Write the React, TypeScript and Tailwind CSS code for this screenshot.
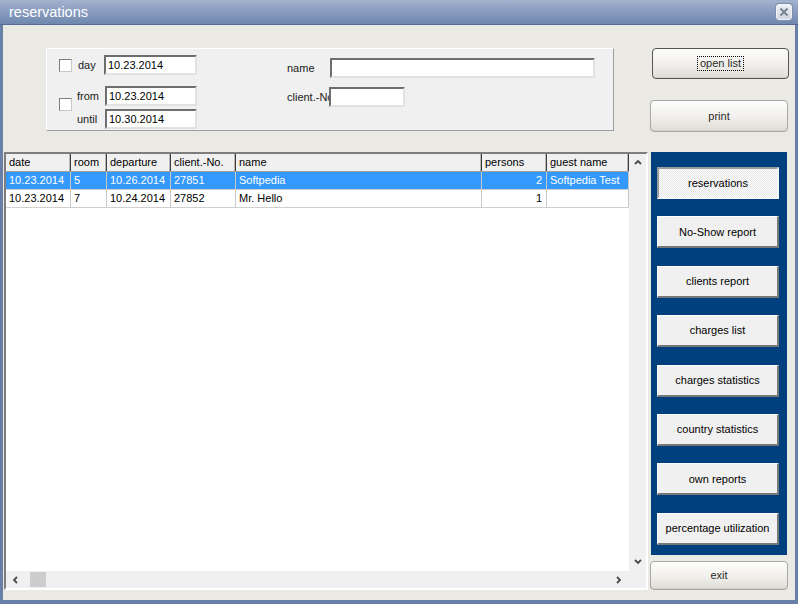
import React from 'react'

const font = "font-['Liberation_Sans',Arial,sans-serif]"

const columns = [
  { label: 'date', w: 'w-[65px]', right: false },
  { label: 'room', w: 'w-[36px]', right: false },
  { label: 'departure', w: 'w-[64px]', right: false },
  { label: 'client.-No.', w: 'w-[65px]', right: false },
  { label: 'name', w: 'w-[246px]', right: false },
  { label: 'persons', w: 'w-[65px]', right: true },
  { label: 'guest name', w: 'w-[82px]', right: false },
]

const rows = [
  { cells: ['10.23.2014', '5', '10.26.2014', '27851', 'Softpedia', '2', 'Softpedia Test'], selected: true },
  { cells: ['10.23.2014', '7', '10.24.2014', '27852', 'Mr. Hello', '1', ''], selected: false },
]

const reports = [
  'reservations',
  'No-Show report',
  'clients report',
  'charges list',
  'charges statistics',
  'country statistics',
  'own reports',
  'percentage utilization',
]

function Chevron({ dir }: { dir: 'up' | 'down' | 'left' | 'right' }) {
  const d = {
    up: 'M1 5 L4 2 L7 5',
    down: 'M1 2 L4 5 L7 2',
    left: 'M5 1 L2 4 L5 7',
    right: 'M2 1 L5 4 L2 7',
  }[dir]
  return (
    <svg width={8} height={8} viewBox="0 0 8 8" fill="none" stroke="#4a4a4a" strokeWidth={1.8}>
      <path d={d} />
    </svg>
  )
}

function Field({ value = '', w }: { value?: string; w: string }) {
  return (
    <div
      className={`${w} h-[20px] shrink-0 bg-white border-2 border-t-[#6e6e6e] border-l-[#6e6e6e] border-r-[#e2e2e2] border-b-[#e2e2e2] flex items-center pl-[2px] text-[11px] text-black leading-none`}
    >
      {value}
    </div>
  )
}

function Check() {
  return (
    <div className="w-[13px] h-[13px] shrink-0 bg-white border border-t-[#7c7c7c] border-l-[#7c7c7c] border-r-[#c8c8c8] border-b-[#c8c8c8]" />
  )
}

function XpButton({ label, w, h, def }: { label: string; w: string; h: string; def?: boolean }) {
  return (
    <button
      type="button"
      className={`${w} ${h} shrink-0 rounded-[4px] border ${
        def ? 'border-[#555555]' : 'border-[#a8a8a8]'
      } bg-[linear-gradient(#fdfdfc,#f1efeb_55%,#dfdcd5)] shadow-[inset_0_-1px_0_#d2cfc8] flex items-center justify-center text-[11px] text-[#2a2a2a]`}
    >
      {def ? <span className="border border-dotted border-black px-[2px] leading-[13px]">{label}</span> : label}
    </button>
  )
}

function ReportButton({ label, active }: { label: string; active: boolean }) {
  return (
    <button
      type="button"
      className={`w-[122px] h-[32px] shrink-0 flex items-center justify-center text-[11px] text-black ${
        active
          ? 'border-2 border-t-[#9c9c9c] border-l-[#9c9c9c] border-r-[#f6f6f6] border-b-[#f6f6f6] bg-[image:repeating-conic-gradient(#ffffff_0%_25%,#e4e4e4_0%_50%)] bg-size-[2px_2px]'
          : 'bg-[#f0f0f0] border-t border-l border-t-white border-l-white border-b-2 border-r-2 border-b-[#777777] border-r-[#777777]'
      }`}
    >
      {label}
    </button>
  )
}

export default function App() {
  return (
    <div className={`w-[798px] h-[604px] bg-[#6880a8] flex flex-col overflow-hidden ${font}`}>
      {/* Title bar */}
      <div className="h-[25px] shrink-0 flex items-center justify-between pl-[9px] pr-[6px] bg-[linear-gradient(#a3b3cf,#8a9ec1_45%,#7088ae)] border-b border-[#566c95]">
        <span className="text-[14.5px] text-white leading-none">reservations</span>
        <div className="w-[16px] h-[16px] rounded-[3px] border border-[#f2f4f8] bg-[linear-gradient(#eef1f6,#cfd6e2)] shadow-[0_0_0_1px_#7d8fae] flex items-center justify-center">
          <svg width={10} height={10} viewBox="0 0 10 10" stroke="#7b8494" strokeWidth={2}>
            <path d="M1.5 1.5 L8.5 8.5 M8.5 1.5 L1.5 8.5" />
          </svg>
        </div>
      </div>

      {/* Client area */}
      <div className="flex-1 mx-[3px] mb-[4px] bg-[#ebe9e3] flex pl-[1px] pr-[7px]">
        {/* Left column */}
        <div className="w-[644px] flex flex-col">
          {/* Filter panel */}
          <div className="ml-[42px] mt-[23px] w-[568px] h-[83px] bg-[#f0f0f0] border border-t-white border-l-white border-r-[#a0a0a0] border-b-[#a0a0a0] flex pl-[12px] pt-[6px] text-[11px] text-[#1a1a1a]">
            <div className="flex flex-col">
              <div className="flex items-center h-[20px]">
                <Check />
                <span className="ml-[6px] w-[26px]">day</span>
                <Field value="10.23.2014" w="w-[93px]" />
              </div>
              <div className="flex items-start mt-[11px]">
                <div className="mt-[12px]">
                  <Check />
                </div>
                <div className="ml-[5px] flex flex-col gap-[3px]">
                  <div className="flex items-center">
                    <span className="w-[28px]">from</span>
                    <Field value="10.23.2014" w="w-[92px]" />
                  </div>
                  <div className="flex items-center">
                    <span className="w-[28px]">until</span>
                    <Field value="10.30.2014" w="w-[92px]" />
                  </div>
                </div>
              </div>
            </div>
            <div className="ml-[90px] mt-[3px] flex flex-col">
              <div className="flex items-center">
                <span className="w-[43px]">name</span>
                <Field w="w-[265px]" />
              </div>
              <div className="flex items-center mt-[9px]">
                <span className="w-[42px] overflow-hidden whitespace-nowrap">client.-No.</span>
                <Field w="w-[76px]" />
              </div>
            </div>
          </div>

          {/* List view */}
          <div className="mt-[21px] h-[438px] border-2 border-t-[#7d7d7d] border-l-[#7d7d7d] border-r-white border-b-white flex flex-col text-[11px] text-black">
            <div className="flex flex-1 min-h-0">
              <div className="w-[623px] bg-white flex flex-col overflow-hidden">
                <div className="flex h-[18px] shrink-0 bg-[#f0f0f0] border-b border-[#a0a0a0]">
                  {columns.map((c) => (
                    <div
                      key={c.label}
                      className={`${c.w} shrink-0 pl-[3px] flex items-center border-r border-r-[#3c3c3c] shadow-[inset_-1px_0_0_#b8b8b8] whitespace-nowrap overflow-hidden`}
                    >
                      {c.label}
                    </div>
                  ))}
                </div>
                {rows.map((r, i) => (
                  <div
                    key={i}
                    className={`flex h-[18px] shrink-0 border-b border-[#cfcfcf] ${
                      r.selected ? 'bg-[#3399ff] text-white' : 'bg-white text-black'
                    }`}
                  >
                    {r.cells.map((v, j) => (
                      <div
                        key={j}
                        className={`${columns[j].w} shrink-0 flex items-center whitespace-nowrap overflow-hidden border-r border-[#c8c8c8] ${
                          columns[j].right ? 'justify-end pr-[4px]' : 'pl-[3px]'
                        }`}
                      >
                        {v}
                      </div>
                    ))}
                  </div>
                ))}
              </div>
              <div className="w-[17px] bg-[#f0f0f0] flex flex-col justify-between items-center py-[5px]">
                <Chevron dir="up" />
                <Chevron dir="down" />
              </div>
            </div>
            <div className="h-[17px] shrink-0 flex">
              <div className="w-[623px] bg-[#f0f0f0] flex items-center pl-[6px] pr-[6px]">
                <Chevron dir="left" />
                <div className="ml-[10px] w-[16px] h-[15px] bg-[#cdcdcd]" />
                <div className="flex-1" />
                <Chevron dir="right" />
              </div>
              <div className="w-[17px] bg-[#f0f0f0]" />
            </div>
          </div>
        </div>

        {/* Right column */}
        <div className="ml-[2px] w-[138px] flex flex-col">
          <div className="mt-[23px] ml-[2px]">
            <XpButton label="open list" w="w-[137px]" h="h-[31px]" def />
          </div>
          <div className="mt-[21px]">
            <XpButton label="print" w="w-[138px]" h="h-[32px]" />
          </div>
          <div className="mt-[20px] mx-[1px] h-[403px] bg-[#00407f] flex flex-col gap-[17.4px] pl-[6px] pt-[15px]">
            {reports.map((r, i) => (
              <ReportButton key={r} label={r} active={i === 0} />
            ))}
          </div>
          <div className="mt-[6px]">
            <XpButton label="exit" w="w-[138px]" h="h-[29px]" />
          </div>
        </div>
      </div>
    </div>
  )
}
